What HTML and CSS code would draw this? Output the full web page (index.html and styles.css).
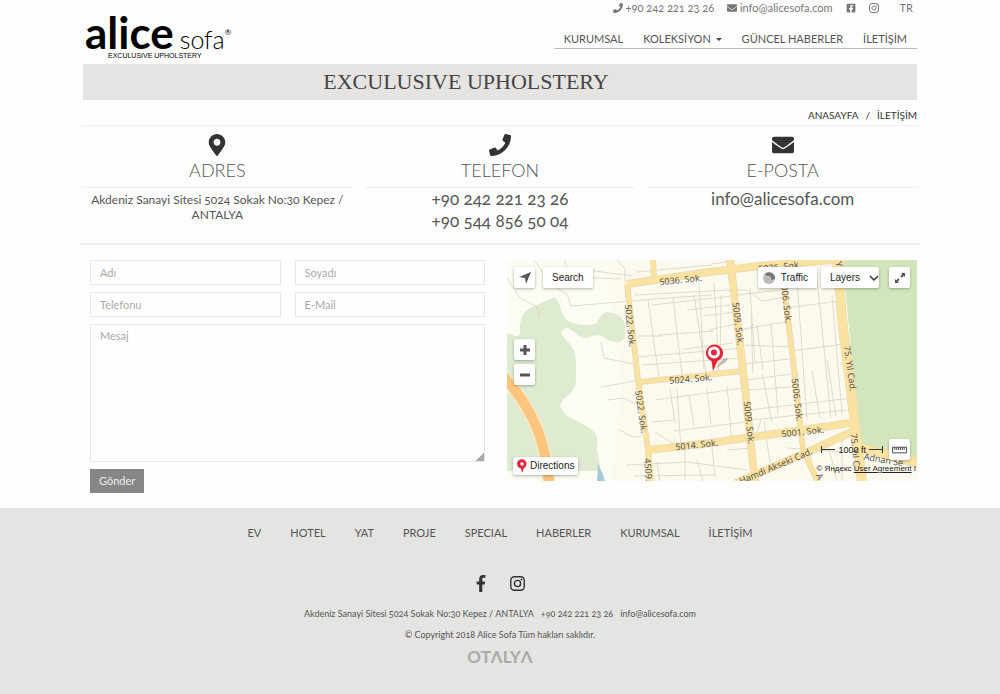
FILE: index.html
```html
<!DOCTYPE html>
<html lang="tr">
<head>
<meta charset="utf-8">
<meta name="viewport" content="width=device-width, initial-scale=1">
<title>Alice Sofa - İletişim</title>
<link rel="stylesheet" href="styles.css">
</head>
<body>
<svg class="sprite" aria-hidden="true">
  <symbol id="phone" viewBox="0 0 512 512"><path d="M493.4 24.6l-104-24c-11.3-2.6-22.9 3.3-27.5 13.9l-48 112c-4.200 9.800-1.400 21.300 6.900 28l60.600 49.600c-36 76.700-98.900 140.500-177.200 177.200l-49.600-60.600c-6.800-8.300-18.200-11.100-28-6.900l-112 48C3.900 366.500-2 378.100.6 389.400l24 104C27.100 504.200 36.700 512 48 512c256.100 0 464-207.500 464-464 0-11.200-7.700-20.900-18.600-23.400z"/></symbol>
  <symbol id="mail" viewBox="0 0 512 512"><path d="M502.300 190.800c3.900-3.100 9.700-.2 9.700 4.700V400c0 26.500-21.500 48-48 48H48c-26.500 0-48-21.500-48-48V195.600c0-5 5.700-7.800 9.700-4.700 22.400 17.400 52.100 39.500 154.100 113.600 21.100 15.400 56.700 47.800 92.200 47.600 35.700.3 72-32.800 92.300-47.600 102-74.100 131.600-96.300 154-113.700zM256 320c23.200.4 56.600-29.200 73.400-41.400 132.700-96.300 142.800-104.700 173.400-128.700 5.800-4.500 9.200-11.500 9.200-18.900v-19c0-26.500-21.500-48-48-48H48c-26.500 0-48 21.500-48 48v19c0 7.400 3.400 14.300 9.200 18.900 30.600 23.900 40.700 32.400 173.400 128.700 16.800 12.200 50.200 41.800 73.400 41.400z"/></symbol>
  <symbol id="pin" viewBox="0 0 384 512"><path d="M172.300 501.700C27 291 0 269.400 0 192 0 86 86 0 192 0s192 86 192 192c0 77.400-27 99-172.300 309.700-9.500 13.800-29.900 13.800-39.500 0zM192 272c44.200 0 80-35.800 80-80s-35.800-80-80-80-80 35.800-80 80 35.800 80 80 80z"/></symbol>
  <symbol id="fbsquare" viewBox="0 0 448 512"><path d="M400 32H48A48 48 0 0 0 0 80v352a48 48 0 0 0 48 48h137.300V327.700h-63V256h63v-54.600c0-62.200 37-96.500 93.700-96.500 27.100 0 55.500 4.800 55.500 4.800v61h-31.300c-30.800 0-40.400 19.100-40.400 38.700V256h68.800l-11 71.700h-57.800V480H400a48 48 0 0 0 48-48V80a48 48 0 0 0-48-48z"/></symbol>
  <symbol id="fb" viewBox="0 0 264 512"><path d="M215.800 85H264V3.600C255.700 2.500 227.100 0 193.800 0 124.300 0 76.700 42.400 76.700 120.300V192H0v91h76.700v229h94V283h73.600l11.700-91h-85.300v-62.700c0-26.300 7.300-44.300 45.100-44.300z"/></symbol>
  <symbol id="insta" viewBox="0 0 448 448"><rect x="22" y="22" width="404" height="404" rx="110" fill="none" stroke="currentColor" stroke-width="42"/><circle cx="224" cy="224" r="94" fill="none" stroke="currentColor" stroke-width="42"/><circle cx="344" cy="104" r="27"/></symbol>
</svg>

<header class="container header">
  <a class="logo" href="#" aria-label="Alice Sofa">
    <span class="logo-name"><b>alice</b><span>sofa</span><sup>®</sup></span>
    <small>EXCULUSIVE UPHOLSTERY</small>
  </a>
  <div class="header-side">
    <div class="topbar">
      <a href="#"><svg class="ico"><use href="#phone"/></svg> +90 242 221 23 26</a>
      <a href="#"><svg class="ico"><use href="#mail"/></svg> info@alicesofa.com</a>
      <a href="#" aria-label="Facebook"><svg class="ico"><use href="#fbsquare"/></svg></a>
      <a href="#" aria-label="Instagram"><svg class="ico"><use href="#insta"/></svg></a>
      <a class="lang" href="#">TR</a>
    </div>
    <nav class="nav">
      <a href="#">KURUMSAL</a>
      <a href="#">KOLEKSİYON <i class="caret"></i></a>
      <a href="#">GÜNCEL HABERLER</a>
      <a href="#">İLETİŞİM</a>
    </nav>
  </div>
</header>

<main class="container">
  <h1 class="band">EXCULUSIVE UPHOLSTERY</h1>
  <nav class="crumbs"><a href="#">ANASAYFA</a><span>/</span><a href="#">İLETİŞİM</a></nav>

  <section class="contacts">
    <div class="contact">
      <svg class="big-ico"><use href="#pin"/></svg>
      <h2>ADRES</h2>
      <p class="address">Akdeniz Sanayi Sitesi 5024 Sokak No:30 Kepez / ANTALYA</p>
    </div>
    <div class="contact">
      <svg class="big-ico"><use href="#phone"/></svg>
      <h2>TELEFON</h2>
      <p>+90 242 221 23 26<br>+90 544 856 50 04</p>
    </div>
    <div class="contact">
      <svg class="big-ico"><use href="#mail"/></svg>
      <h2>E-POSTA</h2>
      <p>info@alicesofa.com</p>
    </div>
  </section>

  <section class="reach">
    <form class="form">
      <input type="text" placeholder="Adı" aria-label="Adı">
      <input type="text" placeholder="Soyadı" aria-label="Soyadı">
      <input type="tel" placeholder="Telefonu" aria-label="Telefonu">
      <input type="email" placeholder="E-Mail" aria-label="E-Mail">
      <textarea placeholder="Mesaj" aria-label="Mesaj"></textarea>
      <button type="button">Gönder</button>
    </form>

    <div class="map">
      <svg class="map-canvas" viewBox="0 0 410 221" preserveAspectRatio="xMidYMid slice" role="img" aria-label="Harita">
        <rect width="410" height="221" fill="#fcfaee"/>
        <path fill="#fdfcf3" d="M0 0h100l5 50 10 70-10 101H0z"/>
        <path fill="#deebd0" d="M0 73C8 76 13 78 13 72 12 58 17 52 23 48L48 37C54 43 53 54 60 60c8 5 20 7 30 3 3-8 8-13 14-10 9 1 14 7 14 14v10c-3 6-10 6-17 3-8-6-12-6-20-2-10 1-17-11-22-10-8 4-5 6 2 14 7 6 9 16 8 32 1 21-9 18-16 31 4 13 14 13 24 20 13 6 15 13 13 24l4 22H0z"/>
        <path fill="#d3e5bc" d="M333 0l6 35 8 85 8 64 28 9 27 8V0z"/>
        <path fill="#a9c8dc" d="M91 204q5 9 7 17h-8z"/>
        <g fill="none" stroke="#d9d0c5" stroke-width=".8">
          <path d="M0 18l13 20 17 9 2 10M57 0l7 17 50 2M80 10l45 6M110 0l8 9 0 14M27 0q20 30 33 34l4 12 60-5 35-3 46-3M94 82l3 16 30 6M94 127l18-3 19-4M101 140l16-2 9 5 6 0M112 169q15 12 23 6M130 12l75-7M205 4l20-3M128 35l95-5M141 40l11 78M166 38l9 77M187 35l12 80M207 22l5 90M152 75l55-4M130 76l25 0M177 89l49-6M180 50l43-5M130 97l107-9M192 26l5 83M202 70l30-7M135 105l100-7M196 56l33-4M214 35l-1 68M145 45l80-9M170 130l4 58M148 140l89-12M163 128l5 35M145 162l23-2M167 171l71-9M182 135l5 31M200 130l4 34M220 126l5 56M148 172l25 16M178 188v32M120 205l60-3 60 8M127 216l80-1M150 202l3 20M190 200l6 22M205 188l3 29M228 35l46-5M231 30l9 0 15 11 24-4M243 28l5 75M231 70l53-9M235 85l52 2M238 104l44-5M250 65l6 45M244 53l2 60M264 63l7 91M290 20l10 140M310 18l14 140M325 35l10 120M278 48l55-7M284 91l54-7M240 130l44-3M242 150l103-12M245 160l95-10M255 113l10 50M239 120l53-7M249 175l5-15M257 161l6 42M220 190l25-2M305 110l8 48M320 100l9 56M280 188l70 5M303 190l4 30M320 181l10 40M335 174l0 47"/>
        </g>
        <g fill="none" stroke-linejoin="round">
          <g stroke="#eddcae">
            <path stroke-width="8" d="M120 24l83-12 50-6 85-7M223-2l13 112 12 112M141 190l62-7 141-20M229 223l74-32 46-21"/>
            <path stroke-width="6" d="M146-2l1 22M120 24l11 96 10 70 3 32M133 122l103-11M275 10l11 90 10 90 15 32"/>
            <path stroke-width="10" d="M330-2l6 70 6 47 8 67 5 40M350 187l62 16"/>
          </g>
          <g stroke="#fae2a0">
            <path stroke-width="6" d="M120 24l83-12 50-6 85-7M223-2l13 112 12 112M141 190l62-7 141-20M229 223l74-32 46-21"/>
            <path stroke-width="4" d="M146-2l1 22M120 24l11 96 10 70 3 32M133 122l103-11M275 10l11 90 10 90 15 32"/>
            <path stroke-width="8" d="M330-2l6 70 6 47 8 67 5 40M350 187l62 16"/>
          </g>
          <path stroke="#f7e9c4" stroke-width="13" d="M-5 115q43 45 47 108"/>
          <path stroke="#fcc57e" stroke-width="10" d="M-5 115q43 45 47 108"/>
        </g>
        <g class="streets">
          <text transform="translate(174 23) rotate(-6)">5036. Sok.</text>
          <text transform="translate(120 66) rotate(84)">5022. Sok.</text>
          <text transform="translate(131 152) rotate(82)">5022. Sok.</text>
          <text transform="translate(184 122) rotate(-5)">5024. Sok.</text>
          <text transform="translate(190 188) rotate(-6)">5014. Sok.</text>
          <text transform="translate(138 210) rotate(86)">4509.</text>
          <text transform="translate(228 64) rotate(83)">5009. Sok.</text>
          <text transform="translate(239 163) rotate(84)">5009. Sok.</text>
          <text transform="translate(276 42) rotate(83)">5006. Sok.</text>
          <text transform="translate(287 140) rotate(83)">5006. Sok.</text>
          <text transform="translate(273 10) rotate(-6)">5036. Sok.</text>
          <text transform="translate(296 175) rotate(-6)">5001. Sok.</text>
          <text transform="translate(340 109) rotate(82)">75. Yıl Cad.</text>
          <text transform="translate(345 190) rotate(85)">75. Yıl C</text>
          <text transform="translate(329 5) rotate(75)">Y</text>
          <text transform="translate(270 209) rotate(-23)">Hamdi Akseki Cad.</text>
          <text transform="translate(376 203) rotate(10)">Adnan Se</text>
          <text transform="translate(310 218) rotate(60)">A</text>
        </g>
        <path fill="#777" opacity=".45" d="M208 109l8-10 5-1-2 4z"/>
        <path fill="#e5243b" d="M206 111l-1.500-10a8.500 8.500 0 1 1 6 0z"/>
        <circle cx="207" cy="92.500" r="6" fill="#fff"/>
        <circle cx="207" cy="92.500" r="3" fill="#e5243b"/>
      </svg>

      <div class="map-top">
        <button class="mbtn sq" type="button" aria-label="Konum"><svg viewBox="0 0 12 12"><path d="M0 5L12 0 7 12 6 6z"/></svg></button>
        <button class="mbtn search" type="button">Search</button>
        <span class="spacer"></span>
        <button class="mbtn" type="button"><svg viewBox="0 0 12 12"><circle cx="6" cy="6" r="6" fill="#bbb"/><path fill="#777" d="M2 2a6 6 0 0 1 10 5L8 8a3 3 0 0 0-4-4z"/></svg>Traffic</button>
        <button class="mbtn layers" type="button">Layers<svg viewBox="0 0 10 10"><path d="M1 3l4 4 4-4" fill="none" stroke="#333" stroke-width="1.500"/></svg></button>
        <button class="mbtn sq full" type="button" aria-label="Tam ekran"><svg viewBox="0 0 12 12"><path d="M7 1h4v4L9.700 3.700 7.700 5.700 6.300 4.300l2-2zM5 11H1V7l1.300 1.300 2-2 1.400 1.400-2 2z"/></svg></button>
      </div>
      <div class="map-zoom">
        <button class="mbtn sq" type="button" aria-label="Yakınlaştır"><svg viewBox="0 0 12 12"><path d="M1 4.500h3.500V1h3v3.500H11v3H7.500V11h-3V7.500H1z"/></svg></button>
        <button class="mbtn sq" type="button" aria-label="Uzaklaştır"><svg viewBox="0 0 12 12"><path d="M1 4.500h10v3H1z"/></svg></button>
      </div>
      <button class="mbtn directions" type="button"><svg viewBox="0 0 10 14"><path fill="#e5243b" d="M5 14L4 9.500A4.700 4.700 0 1 1 7 9z"/><circle cx="5" cy="5" r="1.800" fill="#fff"/></svg>Directions</button>
      <div class="map-scale">
        <span class="ruler"><i></i>1000 ft<i></i></span>
        <button class="mbtn sq" type="button" aria-label="Cetvel"><svg class="wide" viewBox="0 0 16 8"><path d="M.5 1h15v6H.5zM3 1v3M5 1v3M7 1v3M9 1v3M11 1v3M13 1v3" fill="none" stroke="#444"/></svg></button>
      </div>
      <div class="map-credit">© Яндекс <a href="#">User Agreement</a> I</div>
    </div>
  </section>
</main>

<footer class="footer">
  <nav class="footer-nav">
    <a href="#">EV</a><a href="#">HOTEL</a><a href="#">YAT</a><a href="#">PROJE</a><a href="#">SPECIAL</a><a href="#">HABERLER</a><a href="#">KURUMSAL</a><a href="#">İLETİŞİM</a>
  </nav>
  <div class="social">
    <a href="#" aria-label="Facebook"><svg class="fb"><use href="#fb"/></svg></a>
    <a href="#" aria-label="Instagram"><svg><use href="#insta"/></svg></a>
  </div>
  <p class="footer-info"><span>Akdeniz Sanayi Sitesi 5024 Sokak No:30 Kepez / ANTALYA</span><span>+90 242 221 23 26</span><span>info@alicesofa.com</span></p>
  <p>© Copyright 2018 Alice Sofa Tüm hakları saklıdır.</p>
  <a class="maker" href="#">OTΛLYΛ</a>
</footer>
</body>
</html>
```
FILE: styles.css
```css
* { box-sizing: border-box; }
body {
  margin: 0;
  min-height: 100vh;
  display: flex;
  flex-direction: column;
  background: #fefefe;
  color: #555;
  font: 12px/15px Lato, "Open Sans", sans-serif;
  font-variant-numeric: oldstyle-nums;
}
a { color: inherit; text-decoration: none; }
p, h1, h2 { margin: 0; font-weight: 400; }
svg { fill: currentColor; }
.sprite { position: absolute; width: 0; height: 0; }
.container { width: 84%; max-width: 1170px; margin: 0 auto; padding: 0 3px; }

.header { display: flex; justify-content: space-between; min-height: 64px; }
.logo { display: flex; flex-direction: column; padding: 12px 0 0 2px; color: #000; }
.logo-name { display: flex; align-items: baseline; gap: 6px; height: 40px; line-height: 40px; }
.logo-name b { font-size: 44px; font-weight: 700; }
.logo-name span { font-size: 25px; font-weight: 300; }
.logo-name sup { margin-left: -6px; font-size: 8px; line-height: 8px; align-self: center; }
.logo small { padding-left: 23px; font: 7px/8px "Liberation Sans", sans-serif; }
.header-side { display: flex; flex-direction: column; align-items: flex-end; }
.topbar { display: flex; gap: 13px; padding-right: 4px; color: #777; font-size: 11px; }
.topbar .lang { margin-left: 8px; }
.ico { width: 10px; height: 10px; vertical-align: -1px; }
.nav { display: flex; gap: 20px; margin-top: 13px; padding: 3px 10px 2px; border-bottom: 1px solid #bbb; font-size: 11px; }
.caret { display: inline-block; margin-left: 2px; border: 3px solid transparent; border-top-color: #444; border-bottom: 0; vertical-align: 2px; }

.band {
  padding: 4px 68px 4px 0;
  background: #e5e4e3;
  color: #444;
  font: 22px/28px "Liberation Serif", serif;
  text-align: center;
}
.crumbs { display: flex; justify-content: flex-end; gap: 7px; padding: 8px 0 2px; border-bottom: 1px solid #eee; color: #333; font-size: 10px; }

.contacts { display: grid; grid-template-columns: repeat(3, 1fr); gap: 14px; margin: 0 -3px; padding: 8px 3px 11px; border-bottom: 2px solid #eee; text-align: center; }
.big-ico { display: block; width: 22px; height: 22px; margin: 0 auto; color: #333; }
.contact h2 { padding: 2px 0 5px; border-bottom: 1px solid #eee; font-size: 18px; font-weight: 300; line-height: 24px; }
.contact p { font-size: 17px; line-height: 22px; }
.contact .address { padding: 4px 8px 0; font-size: 12px; line-height: 15px; }

.reach { display: grid; grid-template-columns: 1fr 1fr; gap: 14px; padding: 15px 0; }
.form { display: grid; grid-template-columns: 1fr 1fr; gap: 7px 14px; padding: 0 8px 0 7px; align-content: start; }
.form input, .form textarea { width: 100%; min-width: 0; margin: 0; padding: 3px 9px; border: 1px solid #e8e8e8; border-radius: 0; background: #fefefe; font: 11px/16px Lato, sans-serif; color: #555; }
.form input { height: 25px; }
.form textarea { grid-column: 1 / -1; display: block; height: 138px; }
.form ::placeholder { color: #aaa; opacity: 1; }
.form textarea::-webkit-resizer { background: linear-gradient(135deg, transparent 50%, #aaa 50%) right bottom / 8px 8px no-repeat; }
.form button { justify-self: start; padding: 4px 9px; border: 0; background: #868686; color: #eee; font: 11px/16px Lato, sans-serif; }

.map { position: relative; height: 221px; overflow: hidden; font: 10px/12px "Liberation Sans", sans-serif; color: #222; }
.map-canvas { display: block; width: 100%; height: 100%; }
.streets { font: 9px "Noto Sans", sans-serif; font-variant-numeric: lining-nums; fill: #555; text-anchor: middle; }
.mbtn { display: inline-flex; align-items: center; justify-content: center; gap: 6px; height: 21px; padding: 0 9px; border: 0; border-radius: 2px; background: #fff; box-shadow: 0 1px 3px rgba(0, 0, 0, .3); color: #222; font: inherit; }
.mbtn svg { flex: none; width: 12px; height: 12px; fill: #555; }
.mbtn.sq { width: 21px; padding: 0; }
.mbtn .wide { width: 15px; height: 8px; }
.map-top { position: absolute; top: 7px; left: 7px; right: 7px; display: flex; gap: 4px; }
.map-top .search { margin-left: 4px; }
.map-top .spacer { flex: 1; }
.map-top .mbtn:nth-child(4) { padding: 0 9px 0 5px; }
.map-top .layers { gap: 9px; padding: 0 0 0 9px; }
.map-top .layers svg { width: 10px; height: 10px; }
.map-top .full { margin-left: 6px; }
.map-zoom { position: absolute; top: 79px; left: 7px; display: grid; gap: 4px; }
.directions { position: absolute; left: 6px; bottom: 6px; height: 18px; gap: 3px; padding: 0 4px; }
.directions svg { width: 10px; height: 14px; }
.map-scale { position: absolute; right: 7px; bottom: 21px; display: flex; align-items: center; gap: 6px; font-size: 9px; }
.ruler { display: flex; align-items: center; gap: 3px; }
.ruler i { width: 14px; height: 7px; border-left: 1px solid #333; background: linear-gradient(#333, #333) center / 100% 1px no-repeat; }
.ruler i:last-child { border-left: 0; border-right: 1px solid #333; }
.map-credit { position: absolute; right: 1px; bottom: 6px; font-size: 8px; }
.map-credit a { text-decoration: underline; }

.footer { flex: 1; padding: 18px 16px; background: #e4e4e2; text-align: center; font-size: 9px; line-height: 14px; }
.footer-nav { display: flex; flex-wrap: wrap; justify-content: center; gap: 29px; font-size: 11px; }
.social { display: flex; justify-content: center; gap: 24px; margin: 35px 0 15px; color: #333; }
.social svg { display: block; width: 15px; height: 17px; }
.social .fb { width: 10px; }
.footer-info { display: flex; flex-wrap: wrap; justify-content: center; gap: 7px; margin: 14px 0 7px; }
.maker { display: inline-block; margin-top: 6px; color: #aaa; font-size: 17px; font-weight: 700; line-height: 17px; }

@media (max-width: 720px) {
  .header { flex-wrap: wrap; }
  .contacts, .reach { grid-template-columns: 1fr; }
  .band { padding-right: 0; }
}
```
